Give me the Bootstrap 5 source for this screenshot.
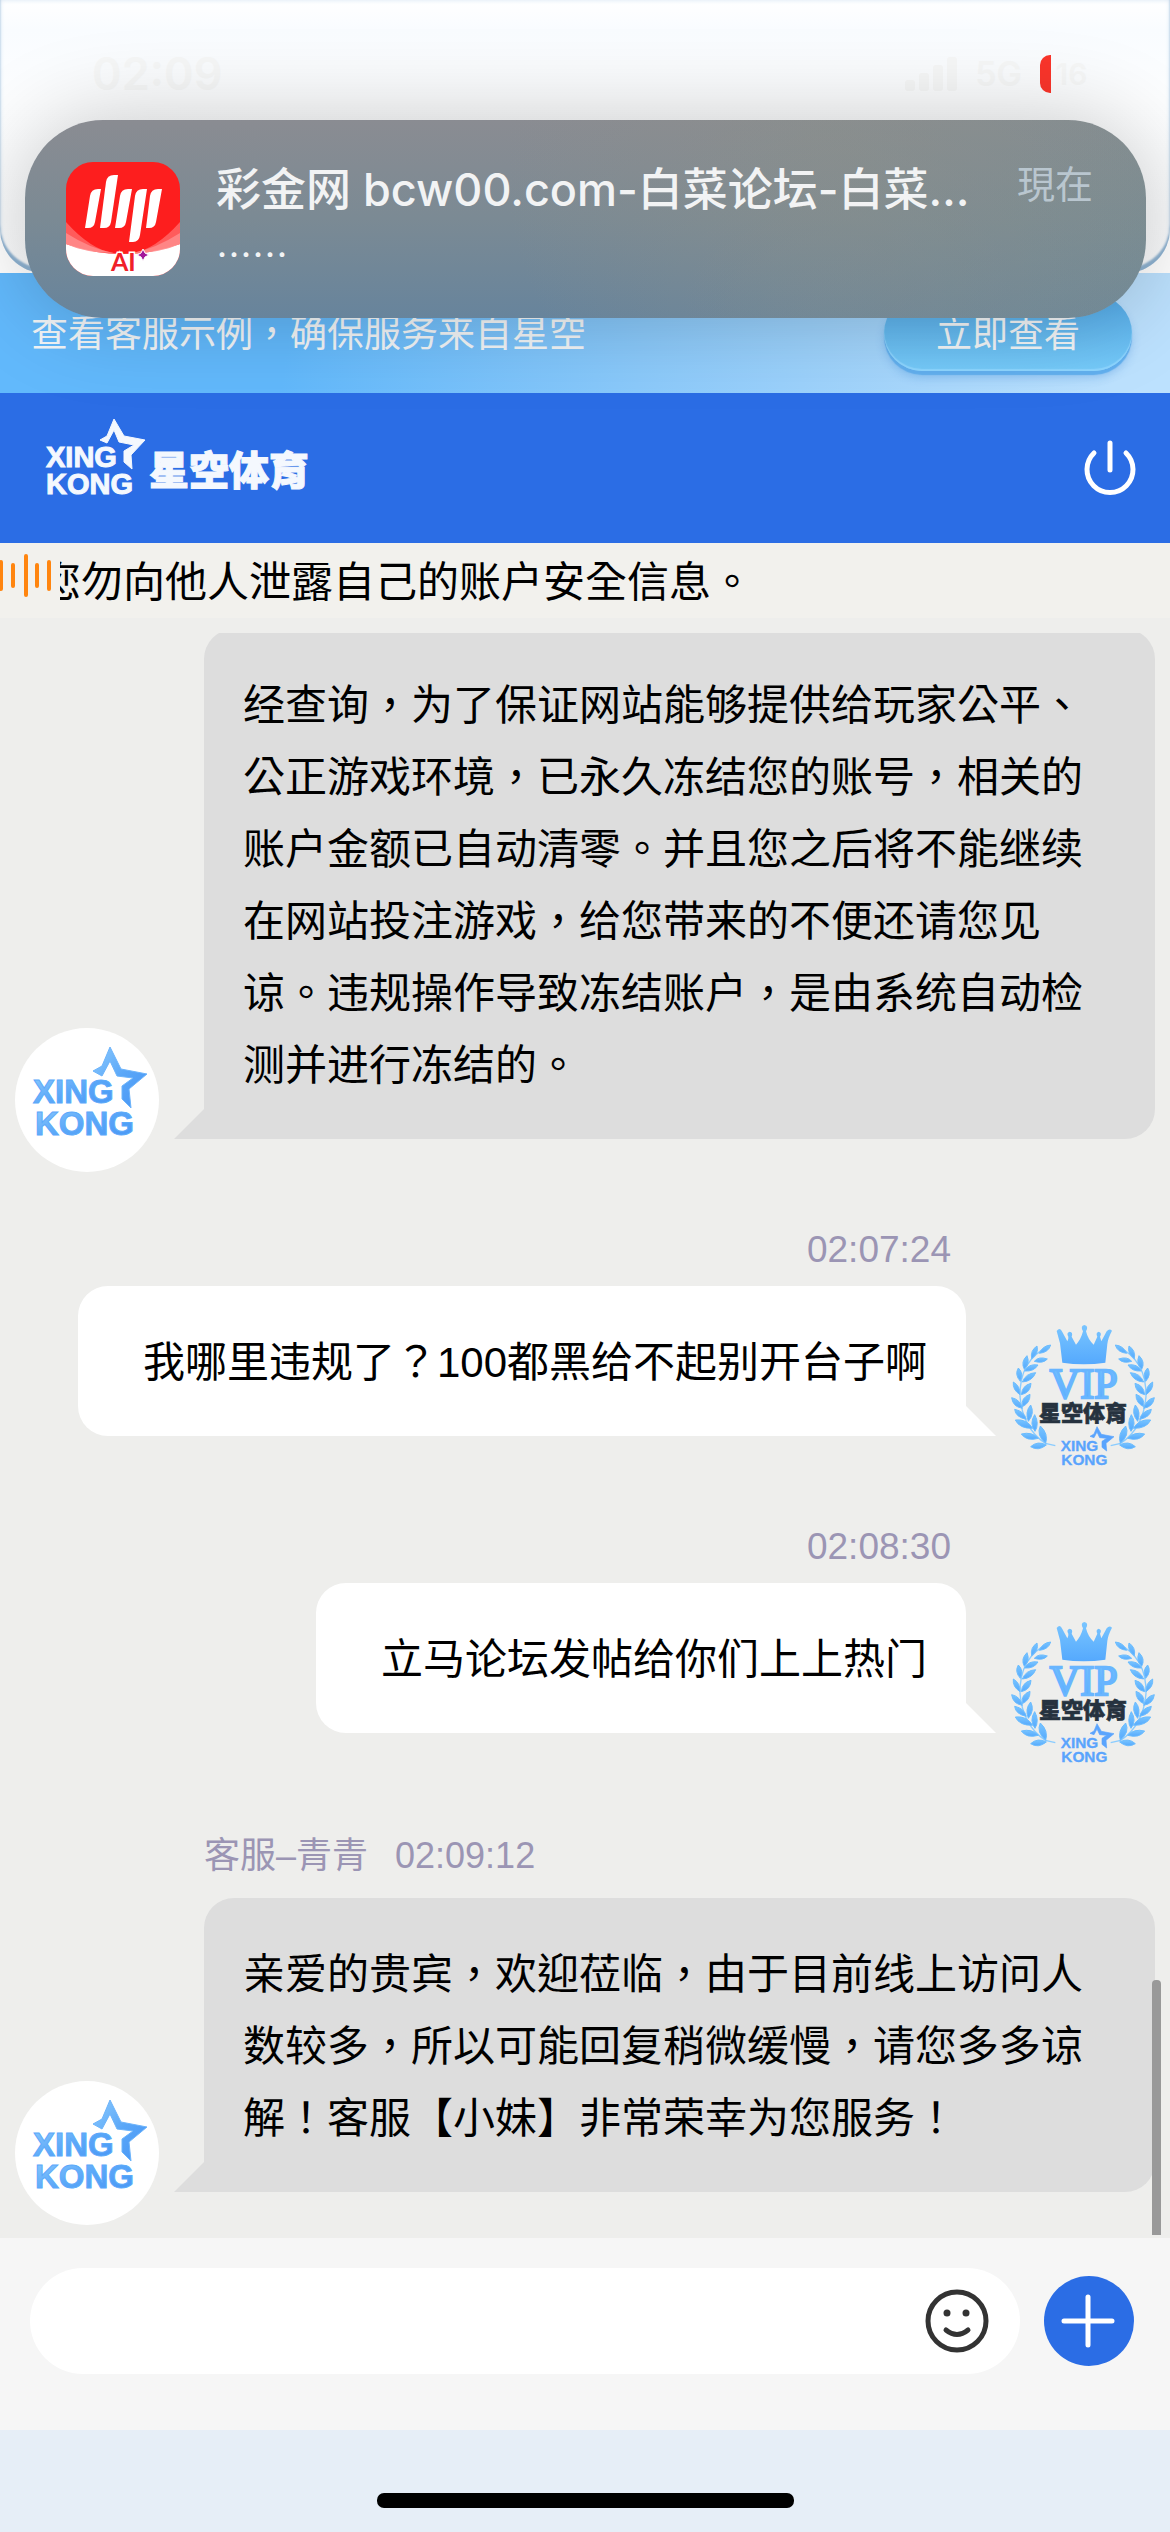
<!DOCTYPE html>
<html lang="zh-Hant">
<head>
<meta charset="utf-8">
<meta name="viewport" content="width=device-width, initial-scale=1">
<title>星空体育 在线客服</title>
<link href="https://cdn.jsdelivr.net/npm/bootstrap@5.3.0/dist/css/bootstrap.min.css" rel="stylesheet">
<style>
  body { background: #e6eef7; color: #000; font-family: "Liberation Sans", "Noto Sans CJK TC", sans-serif; font-size: 42px; line-height: 72px; }
  svg { display: block; flex: none; }
  .status-area { background: #fff; }
  .status-panel { height: 273px; padding: 46px 67px 0 92px; border-radius: 0 0 44px 44px; background: linear-gradient(#fff, #f9fcff 30px, #fdfeff 100px, #fafbfc); box-shadow: inset 0 -5px 2px #8fb3d2, inset 0 0 5px #d5e4f2; color: #f7f8f8; font: 600 45px/56px Inter, sans-serif; }
  .status-icons { gap: 18px; font-size: 34px; }
  .power-level { width: 63px; height: 38px; border-radius: 10px; background: linear-gradient(90deg, #fb352b 11px, transparent 11px); font-size: 30px; line-height: 38px; color: #f7f8f8; }
  .notice-card { top: 120px; left: 25px; right: 24px; padding: 42px 53px 37px 41px; gap: 36px; border-radius: 78px; background: radial-gradient(circle at 72% 20%, rgba(140,144,138,.5), transparent 40%), linear-gradient(100deg, transparent 60%, rgba(125,143,143,.5)), linear-gradient(#8a8c92, #7b8a94 50%, #67849c); box-shadow: 0 0 90px rgba(0,0,0,.22); color: #f2f3f4; z-index: 2; }
  .notice-title { font: 500 45px/56px Inter, "Noto Sans CJK SC", sans-serif; }
  .notice-body { padding-top: 7px; font: 36px/56px "Noto Sans CJK TC", sans-serif; }
  .notice-time { font-size: 38px; line-height: 46px; color: #b9c6cf; }
  .promo { padding: 22px 38px 22px 31px; font-size: 37px; line-height: 60px; color: #f3f6f8; background: linear-gradient(98deg, #62b9fc 25%, #8bcafb 55%, #bce1fe 95%); }
  .promo-lead { padding-top: 4px; }
  .promo-btn { width: 248px; height: 76px; padding: 4px 0 0; border: 0; border-radius: 38px; font-size: 36px; line-height: 72px; color: #f3f6f8; background: linear-gradient(#54aae8, #76cbfa); box-shadow: inset 0 -2px 1px #8ed6ff, 0 4px 1px #62b0ef, 0 7px 8px rgba(60,140,220,.3); }
  .brand-bar { height: 150px; padding: 0 32px 0 43px; background: #2b6de5; }
  .plain-btn { padding: 0; border: 0; background: none; }
  .tip-bar { background: #f2f1ed; height: 75px; line-height: 71px; }
  .tip-text { margin-left: -21px; padding-top: 4px; }
  .chat { background: #eeeeec; padding-top: 15px; }
  .chat-view { padding-bottom: 13px; }
  .chat-log { margin-top: -4px; padding: 0 15px; }
  .msg { gap: 45px; }
  .avatar { width: 144px; height: 144px; margin-bottom: -33px; flex: none; }
  .msg-row { padding-bottom: 33px; }
  .bubble { position: relative; padding: 41px 39px 37px; border-radius: 30px 30px 30px 0; background: #ddd; }
  .bubble::before { content: ""; position: absolute; left: -30px; bottom: 0; border: 15px solid transparent; border-right-color: #ddd; border-bottom-color: #ddd; }
  .bubble-own { padding-left: 65px; border-radius: 30px 30px 0 30px; background: #fff; }
  .bubble-own::before { left: auto; right: -30px; border-color: transparent transparent #fff #fff; }
  .meta { color: #9b95b4; font-size: 36px; line-height: 54px; }
  .meta-clock { font-size: 37px; }
  .meta-own { padding: 51px 204px 9px 0; }
  .meta-agent { padding: 63px 0 15px 189px; gap: 27px; }
  .scroll-thumb { position: absolute; right: 9px; bottom: 3px; width: 9px; height: 255px; border-radius: 4px 4px 0 0; background: #999; }
  .composer { padding: 30px 36px 56px 30px; gap: 24px; background: #f6f6f6; }
  .composer-box { height: 106px; padding: 0 31px 0 40px; border-radius: 53px; background: #fff; }
  .composer-box input, .composer-box input:focus { border: 0; box-shadow: none; background: none; font-size: 42px; }
  .home-area { padding: 63px 0 24px; }
  .home-pill { width: 417px; height: 15px; border-radius: 7px; background: #000; }
</style>
<script src="https://cdn.jsdelivr.net/npm/bootstrap@5.3.0/dist/js/bootstrap.bundle.min.js"></script>
</head>
<body>
<svg width="0" height="0" class="position-absolute" aria-hidden="true">
  <defs>
    <linearGradient id="sky" x1="0" y1="0" x2="0" y2="1"><stop offset="0" stop-color="#79c5ff"/><stop offset="1" stop-color="#55a9fd"/></linearGradient>
    <linearGradient id="sheen" x1="0" y1="0" x2="1" y2="1"><stop offset="0" stop-color="#8ccafd"/><stop offset=".5" stop-color="#5aa7f8"/><stop offset="1" stop-color="#4795f5"/></linearGradient>
    <path id="star" d="M95 19 106 41 132 46 114 61 116 80 107 71 107 58 118 50 102 48 95 33 87 48 78 43 87 38Z"/>
    <g id="laurel">
      <path d="M205 140Q118 180 120 290Q128 385 196 430L226 437" fill="none" stroke="#8accff" stroke-width="4"/>
      <g fill="url(#sky)" stroke="#6bbcff" stroke-width="3" stroke-linejoin="round">
        <path d="M178 160Q188 137 212 135Q206 157 178 160Z"/>
        <path d="M163 184Q176 168 202 177Q189 192 163 184Z"/>
        <path d="M155 176Q150 152 171 138Q177 160 155 176Z"/>
        <path d="M134 213Q146 190 174 195Q162 215 134 213Z"/>
        <path d="M133 208Q121 186 141 167Q151 191 133 208Z"/>
        <path d="M127 246Q137 220 167 218Q157 244 127 246Z"/>
        <path d="M121 244Q103 224 115 204Q132 220 121 244Z"/>
        <path d="M124 284Q126 257 153 250Q152 278 124 284Z"/>
        <path d="M120 284Q97 269 100 246Q121 258 120 284Z"/>
        <path d="M127 320Q122 293 150 283Q151 309 127 320Z"/>
        <path d="M127 325Q98 320 95 293Q120 298 127 325Z"/>
        <path d="M145 364Q134 336 152 315Q165 340 145 364Z"/>
        <path d="M139 358Q106 351 104 328Q133 334 139 358Z"/>
        <path d="M165 394Q147 371 164 344Q179 371 165 394Z"/>
        <path d="M158 385Q118 386 106 360Q140 356 158 385Z"/>
        <path d="M197 430Q168 405 181 378Q206 401 197 430Z"/>
        <path d="M175 415Q140 425 124 402Q156 394 175 415Z"/>
        <path d="M199 435Q174 455 152 440Q173 421 199 435Z"/>
      </g>
    </g>
    <symbol id="agent-logo" viewBox="0 0 144 144">
      <circle cx="72" cy="72" r="72" fill="#fff"/>
      <g font-family="Liberation Sans, sans-serif" font-weight="700" font-size="33" fill="url(#sheen)" stroke="#5ba9fa" stroke-width="1">
        <text x="18" y="75">XING</text><text x="20" y="107">KONG</text>
      </g>
      <use href="#star" fill="url(#sheen)" stroke="#6db4fb" stroke-width="1"/>
    </symbol>
    <symbol id="vip-logo" viewBox="93 75 432 432">
      <use href="#laurel"/><use href="#laurel" transform="translate(618 0) scale(-1 1)"/>
      <path d="M247 188 240 130 230 93Q240 80 247 96L262 124Q266 118 265 110Q258 98 269 95Q280 97 275 110L288 134Q303 118 309 94Q300 78 313 75Q327 78 318 94Q324 119 341 134L352 110Q346 98 356 95Q367 98 360 110L364 124 380 94Q388 84 396 92Q384 114 382 132L376 188Q311 197 247 188Z" fill="url(#sky)"/>
      <text x="311" y="295" text-anchor="middle" font-family="Liberation Serif, serif" font-size="126" fill="url(#sky)" stroke="#68b5ff" stroke-width="7">VIP</text>
      <text x="309" y="363" text-anchor="middle" font-family="Noto Sans CJK SC, sans-serif" font-weight="900" font-size="66" fill="#26323f" stroke="#26323f" stroke-width="2">星空体育</text>
      <g font-family="Liberation Sans, sans-serif" font-weight="700" font-size="46" fill="#5aa4fd" stroke="#5aa4fd">
        <text x="242" y="453">XING</text><text x="244" y="495">KONG</text>
      </g>
      <path d="M351 380 364 403 402 410 378 430 380 453 366 442 366 424 380 415 359 413 351 396 342 413 330 409 342 402Z" fill="#5aa4fd" stroke="#5aa4fd" stroke-width="2"/>
    </symbol>
  </defs>
</svg>

<div class="position-relative">
  <div class="status-area">
    <div class="status-panel d-flex justify-content-between align-items-start">
      <span>02:09</span>
      <div class="status-icons d-flex align-items-center">
        <svg width="52" height="34" viewBox="0 0 52 34" fill="#f7f8f8"><rect y="23" width="10" height="11" rx="3"/><rect x="14" y="16" width="10" height="18" rx="3"/><rect x="28" y="8" width="10" height="26" rx="3"/><rect x="42" width="10" height="34" rx="3"/></svg>
        <span>5G</span>
        <span class="power-level text-center">16</span>
      </div>
    </div>
  </div>

  <div class="notice-card position-absolute d-flex" role="alert">
    <svg width="114" height="114" viewBox="0 0 114 114">
      <defs><clipPath id="tile"><rect width="114" height="114" rx="27"/></clipPath></defs>
      <g clip-path="url(#tile)">
        <path fill="#fd1e1e" d="M0 0H114V114H0Z"/>
        <path fill="#fff" d="M0 82Q57 102 114 82V114H0Z"/>
        <path fill="#ff7070" opacity=".75" d="M0 60Q25 88 48 91Q20 91 0 82ZM114 60Q89 88 66 91Q94 91 114 82Z"/>
        <path fill="#ffb0b0" opacity=".5" d="M0 71Q25 87 48 91Q20 91 0 82ZM114 71Q89 87 66 91Q94 91 114 82Z"/>
        <g fill="#fff">
          <path d="M24 34Q25 27 32 27H35L29 60Q28 66 22 66H19Z"/>
          <path d="M40 20Q41 13 48 13H52L45 60Q44 66 38 66H34Z"/>
          <path d="M54 34Q55 27 62 27H66L60 60Q59 66 53 66H49Z"/>
          <path d="M69 34Q70 27 77 27H81L74 73Q73 80 67 80H63Z"/>
          <path d="M84 34Q85 27 92 27H96L90 60Q89 66 83 66H80Z"/>
        </g>
        <text x="45" y="109" font-family="Lato, sans-serif" font-weight="700" font-size="25" fill="#f02028" stroke="#fff" stroke-width="3" paint-order="stroke">AI</text>
        <path fill="#a3169b" stroke="#fff" stroke-width="1" d="M77 87 79 91 83 93 79 95 77 99 75 95 71 93 75 91Z"/>
      </g>
    </svg>
    <div class="flex-grow-1">
      <div class="notice-title">彩金网 bcw00.com-白菜论坛-白菜…</div>
      <div class="notice-body">……</div>
    </div>
    <div class="notice-time">現在</div>
  </div>

  <section class="promo d-flex justify-content-between align-items-center">
    <span class="promo-lead">查看客服示例，确保服务来自星空</span>
    <button type="button" class="promo-btn">立即查看</button>
  </section>
</div>

<header class="brand-bar d-flex justify-content-between align-items-center">
  <a href="#" aria-label="星空体育">
    <svg width="270" height="100" viewBox="43 418 270 100" fill="#f4f8fe">
      <g font-family="Liberation Sans, sans-serif" font-weight="700" stroke="#f4f8fe">
        <text x="46" y="467" font-size="29">XING</text><text x="46" y="494" font-size="29">KONG</text>
      </g>
      <path d="M114 419 124 436 145 440 131 455 132 469 124 462 124 451 134 445 119 442 114 430 107 443 100 440 107 436Z" stroke="#f4f8fe" stroke-width="1"/>
      <text x="149" y="485" font-family="Noto Sans CJK SC, sans-serif" font-weight="900" font-size="40" stroke="#f4f8fe">星空体育</text>
    </svg>
  </a>
  <button type="button" class="plain-btn" aria-label="退出">
    <svg width="56" height="60" viewBox="0 0 56 60" fill="none" stroke="#fff" stroke-width="5" stroke-linecap="round"><path d="M28 5V32M12 15A23 23 0 1 0 44 15"/></svg>
  </button>
</header>

<div class="tip-bar d-flex">
  <svg width="60" height="64" viewBox="0 0 60 64" stroke="#ff850f" stroke-width="4" stroke-linecap="round"><path d="M1 19V46M13 22V43M26 13V52M37 22V43M49 19V46"/></svg>
  <div class="overflow-hidden text-nowrap flex-grow-1"><div class="tip-text">您勿向他人泄露自己的账户安全信息。</div></div>
</div>

<main class="chat">
  <div class="chat-view position-relative overflow-hidden">
    <div class="chat-log">
      <div class="msg-row"><div class="msg d-flex align-items-end">
        <svg class="avatar"><use href="#agent-logo"/></svg>
        <div class="bubble flex-grow-1">经查询，为了保证网站能够提供给玩家公平、公正游戏环境，已永久冻结您的账号，相关的账户金额已自动清零。并且您之后将不能继续在网站投注游戏，给您带来的不便还请您见谅。违规操作导致冻结账户，是由系统自动检测并进行冻结的。</div>
      </div></div>

      <div class="meta meta-own text-end"><span class="meta-clock">02:07:24</span></div>
      <div class="msg-row"><div class="msg d-flex align-items-end justify-content-end">
        <div class="bubble bubble-own">我哪里违规了？100都黑给不起别开台子啊</div>
        <svg class="avatar"><use href="#vip-logo"/></svg>
      </div></div>

      <div class="meta meta-own text-end"><span class="meta-clock">02:08:30</span></div>
      <div class="msg-row"><div class="msg d-flex align-items-end justify-content-end">
        <div class="bubble bubble-own">立马论坛发帖给你们上上热门</div>
        <svg class="avatar"><use href="#vip-logo"/></svg>
      </div></div>

      <div class="meta meta-agent d-flex"><span>客服–青青</span><span>02:09:12</span></div>
      <div class="msg-row"><div class="msg d-flex align-items-end">
        <svg class="avatar"><use href="#agent-logo"/></svg>
        <div class="bubble flex-grow-1">亲爱的贵宾，欢迎莅临，由于目前线上访问人数较多，所以可能回复稍微缓慢，请您多多谅解！客服【小妹】非常荣幸为您服务！</div>
      </div></div>
    </div>
    <div class="scroll-thumb"></div>
  </div>
</main>

<form class="composer d-flex align-items-center">
  <div class="composer-box d-flex align-items-center flex-grow-1">
    <input type="text" class="form-control p-0" aria-label="输入消息">
    <button type="button" class="plain-btn" aria-label="表情">
      <svg width="64" height="64" viewBox="0 0 64 64" fill="none" stroke="#333" stroke-width="5" stroke-linecap="round"><circle cx="32" cy="32" r="29"/><path d="M21 41Q32 50 43 41"/><circle cx="22" cy="24" r="3.5" fill="#333" stroke="none"/><circle cx="41" cy="24" r="3.5" fill="#333" stroke="none"/></svg>
    </button>
  </div>
  <button type="button" class="plain-btn" aria-label="更多">
    <svg width="90" height="90" viewBox="0 0 90 90"><circle cx="45" cy="45" r="45" fill="#2b6de5"/><path d="M44 21V69M20 45H68" stroke="#fff" stroke-width="5" stroke-linecap="round"/></svg>
  </button>
</form>

<div class="home-area"><div class="home-pill mx-auto"></div></div>
</body>
</html>
